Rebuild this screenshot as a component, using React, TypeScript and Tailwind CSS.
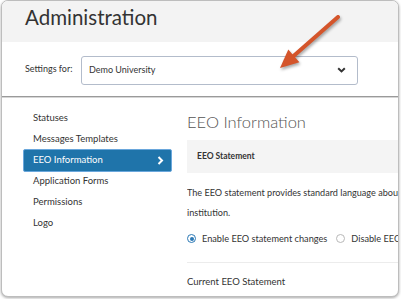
import React from "react";

const font = { fontFamily: "Lato, 'Noto Sans', sans-serif" };

function Radio({ checked, label }: { checked: boolean; label: string }) {
  return (
    <div className="flex items-center gap-[6px] shrink-0">
      {checked ? (
        <div className="w-[9px] h-[9px] rounded-full border-[1.5px] border-[#2b78b5] flex items-center justify-center">
          <div className="w-[4px] h-[4px] rounded-full bg-[#2b78b5]" />
        </div>
      ) : (
        <div className="w-[9px] h-[9px] rounded-full border border-[#b8b8b8] bg-white" />
      )}
      <span className="text-[9.2px] text-[#333] whitespace-nowrap">{label}</span>
    </div>
  );
}

export default function App() {
  const items = [
    "Statuses",
    "Messages Templates",
    "EEO Information",
    "Application Forms",
    "Permissions",
    "Logo",
  ];
  return (
    <div className="relative w-[401px] h-[299px] bg-white overflow-hidden" style={font}>
      <div className="ml-[1px] w-[398px] h-[297px] rounded-[7px] border border-[#bdbdbd] overflow-hidden shadow-[0_1px_3px_rgba(0,0,0,0.35)] bg-white flex flex-col">
        {/* Header */}
        <div className="h-[41px] shrink-0 bg-[#f3f3f3] pl-[23px] pt-[4px]">
          <div className="text-[20.5px] leading-[24px] text-[#333]">Administration</div>
        </div>
        {/* Settings row */}
        <div className="h-[54px] shrink-0 flex items-center pl-[23px]">
          <div className="w-[56px] text-[9px] text-[#333]">Settings for:</div>
          <div className="w-[277px] h-[29px] rounded-[3px] border border-[#b3bccb] flex items-center justify-between pl-[7px] pr-[11px] mt-[2px]">
            <span className="text-[9px] text-[#333]">Demo University</span>
            <svg width="9" height="6" viewBox="0 0 9 6">
              <path d="M1.2 1.2 L4.5 4.4 L7.8 1.2" stroke="#333" strokeWidth="2" fill="none" />
            </svg>
          </div>
        </div>
        <div className="h-[1px] shrink-0 bg-[#9a9a9a]" />
        <div className="h-[1px] shrink-0 bg-[#d6d6d6]" />
        {/* Body */}
        <div className="flex flex-1 min-h-0">
          <div className="w-[149px] ml-[21px] shrink-0 pt-[10px] flex flex-col">
            {items.map((it) =>
              it === "EEO Information" ? (
                <div
                  key={it}
                  className="h-[23px] -my-[1px] rounded-[2px] bg-[#1f74aa] border border-[#6aa7dc] flex items-center justify-between pl-[9px] pr-[7px]"
                >
                  <span className="text-[9.5px] text-white">{it}</span>
                  <svg width="7" height="9" viewBox="0 0 7 9">
                    <path d="M1.5 1 L5 4.5 L1.5 8" stroke="#fff" strokeWidth="2" fill="none" />
                  </svg>
                </div>
              ) : (
                <div key={it} className="h-[21px] flex items-center pl-[10px]">
                  <span className="text-[9.5px] text-[#333]">{it}</span>
                </div>
              )
            )}
          </div>
          <div className="ml-[15px] flex-1 min-w-0 pt-[14px] flex flex-col overflow-hidden">
            <div className="h-[20px] leading-[20px] text-[16.5px] font-light text-[#555] whitespace-nowrap">
              EEO Information
            </div>
            <div className="mt-[8px] h-[33px] bg-[#f4f4f4] flex items-center pl-[10px]">
              <span className="text-[8.5px] font-bold text-[#333] whitespace-nowrap">EEO Statement</span>
            </div>
            <div className="mt-[10px] text-[9.1px] leading-[20px] text-[#333] whitespace-nowrap">
              <div>The EEO statement provides standard language about your</div>
              <div>institution.</div>
            </div>
            <div className="mt-[6px] h-[20px] flex items-center">
              <Radio checked label="Enable EEO statement changes" />
              <div className="ml-[9px]">
                <Radio checked={false} label="Disable EEO statement changes" />
              </div>
            </div>
            <div className="mt-[13px] h-[1px] bg-[#ececec]" />
            <div className="mt-[9px] h-[20px] leading-[20px] text-[9.5px] text-[#333] whitespace-nowrap">
              Current EEO Statement
            </div>
          </div>
        </div>
      </div>
      {/* Annotation arrow */}
      <svg
        className="absolute left-0 top-0 pointer-events-none"
        width="401"
        height="299"
        viewBox="0 0 401 299"
        style={{ filter: "drop-shadow(1px 2px 1.5px rgba(0,0,0,0.35))" }}
      >
        <line x1="338" y1="17" x2="293" y2="56.5" stroke="#d4552b" strokeWidth="4" strokeLinecap="round" />
        <polygon points="280,68 288.3,49.5 299.4,62.2" fill="#d4552b" />
      </svg>
    </div>
  );
}
